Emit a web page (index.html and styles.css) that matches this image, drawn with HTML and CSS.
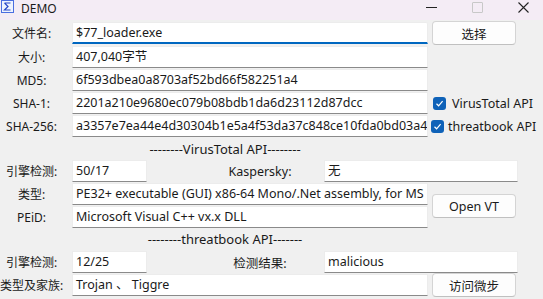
FILE: index.html
```html
<!DOCTYPE html>
<html lang="zh">
<head>
    <meta charset="UTF-8">
    <title>DEMO</title>
    <link rel="stylesheet" href="styles.css">
</head>
<body>
    <div class="titlebar">
        <svg class="app-icon" width="14" height="14" viewBox="0 0 14 14">
            <rect x="0.5" y="0.5" width="12" height="12" fill="#eef3ff" stroke="#4a6ee0"/>
            <path d="M3.5 3 H9.5 M3.5 3 L7 6.5 L3.5 10 H9.5" fill="none" stroke="#2848c8" stroke-width="1.2"/>
        </svg>
        <span class="title">DEMO</span>
        <div class="controls">
            <span class="ctl min"></span>
            <span class="ctl max"></span>
            <svg class="ctl close" width="11" height="11" viewBox="0 0 11 11">
                <path d="M0.5 0.5 L10.5 10.5 M10.5 0.5 L0.5 10.5" stroke="#222" stroke-width="1.1"/>
            </svg>
        </div>
    </div>

    <div class="form">
        <div class="row r1">
            <label class="lbl">文件名:</label>
            <div class="field wide focus">$77_loader.exe</div>
            <button class="btn">选择</button>
        </div>
        <div class="row r2">
            <label class="lbl">大小:</label>
            <div class="field wide">407,040字节</div>
        </div>
        <div class="row r3">
            <label class="lbl">MD5:</label>
            <div class="field wide">6f593dbea0a8703af52bd66f582251a4</div>
        </div>
        <div class="row r4">
            <label class="lbl">SHA-1:</label>
            <div class="field wide">2201a210e9680ec079b08bdb1da6d23112d87dcc</div>
            <span class="check vt"><span class="box"><svg width="9" height="9" viewBox="0 0 9 9"><path d="M1.5 4.8 L3.6 6.8 L7.6 2.2" fill="none" stroke="#fff" stroke-width="1.2"/></svg></span>VirusTotal API</span>
        </div>
        <div class="row r5">
            <label class="lbl">SHA-256:</label>
            <div class="field wide">a3357e7ea44e4d30304b1e5a4f53da37c848ce10fda0bd03a4f</div>
            <span class="check tb"><span class="box"><svg width="9" height="9" viewBox="0 0 9 9"><path d="M1.5 4.8 L3.6 6.8 L7.6 2.2" fill="none" stroke="#fff" stroke-width="1.2"/></svg></span>threatbook API</span>
        </div>

        <div class="sep">--------VirusTotal API--------</div>

        <div class="row r6">
            <label class="lbl">引擎检测:</label>
            <div class="field small">50/17</div>
            <span class="mid">Kaspersky:</span>
            <div class="field right">无</div>
        </div>
        <div class="pair">
            <div class="pair-rows">
                <div class="row r7">
                    <label class="lbl">类型:</label>
                    <div class="field wide">PE32+ executable (GUI) x86-64 Mono/.Net assembly, for MS</div>
                </div>
                <div class="row r8">
                    <label class="lbl">PEiD:</label>
                    <div class="field wide">Microsoft Visual C++ vx.x DLL</div>
                </div>
            </div>
            <button class="btn">Open VT</button>
        </div>

        <div class="sep sep2">--------threatbook API-------</div>

        <div class="row r9">
            <label class="lbl">引擎检测:</label>
            <div class="field small">12/25</div>
            <span class="mid">检测结果:</span>
            <div class="field right">malicious</div>
        </div>
        <div class="row r10">
            <label class="lbl">类型及家族:</label>
            <div class="field wide">Trojan 、 Tiggre</div>
            <button class="btn">访问微步</button>
        </div>
    </div>
</body>
</html>
```

FILE: styles.css
```css
body {
    margin: 0;
    width: 543px;
    height: 299px;
    overflow: hidden;
    background-color: #f0f0f0;
    font-family: "Noto Sans", "Noto Sans CJK SC", sans-serif;
    font-size: 12px;
    color: #1a1a1a;
}
.titlebar {
    height: 20px;
    display: flex;
    align-items: flex-start;
    background-color: #f4ecf5;
}
.app-icon {
    margin: 0 0 0 1px;
}
.title {
    margin-left: 6px;
    line-height: 17px;
}
.controls {
    margin-left: auto;
    display: flex;
    align-items: flex-start;
}
.ctl {
    display: block;
}
.min {
    width: 11px;
    height: 1px;
    background-color: #222;
    margin: 7px 0 0 0;
}
.max {
    width: 9px;
    height: 9px;
    border: 1px solid #c8c8c8;
    border-radius: 1px;
    margin: 2px 0 0 35px;
}
.close {
    margin: 2px 14px 0 35px;
}
.form {
    padding-top: 2px;
}
.row {
    display: flex;
    align-items: center;
    height: 22px;
    margin-bottom: 1px;
}
.r2 {
    margin-top: 2px;
}
.r5 {
    margin-top: 1px;
}
.pair {
    display: flex;
    align-items: center;
}
.lbl {
    width: 63px;
    margin-right: 9px;
    text-align: center;
    white-space: nowrap;
}
.field {
    box-sizing: border-box;
    height: 22px;
    line-height: 20px;
    padding: 0 3px;
    background-color: #fff;
    border: 1px solid #ececec;
    border-bottom: 1px solid #8a8a8a;
    white-space: nowrap;
    overflow: hidden;
    font-size: 12.5px;
}
.wide {
    width: 356px;
}
.small {
    width: 75px;
}
.right {
    width: 194px;
}
.focus {
    border-bottom: 2px solid #0067c0;
    border-radius: 2px 2px 0 0;
}
.mid {
    width: 128px;
    padding-left: 49px;
    text-align: center;
    font-size: 12.5px;
}
.btn {
    box-sizing: border-box;
    width: 84px;
    height: 24px;
    margin-left: 4px;
    background-color: #fdfdfd;
    border: 1px solid #d4d4d4;
    border-bottom-color: #c0c0c0;
    border-radius: 4px;
    font-family: inherit;
    font-size: 12.5px;
    color: #1a1a1a;
    padding: 0;
}
.check {
    display: flex;
    align-items: center;
    white-space: nowrap;
    font-size: 12.5px;
}
.box {
    width: 13px;
    height: 13px;
    border-radius: 3px;
    background-color: #0f62b8;
    display: flex;
    align-items: center;
    justify-content: center;
    margin-right: 6px;
}
.vt {
    margin-left: 5px;
}
.tb {
    margin-left: 3px;
}
.tb .box {
    margin-right: 4px;
}
.sep {
    width: 450px;
    text-align: center;
    height: 22px;
    line-height: 22px;
    font-size: 13px;
}
.sep2 {
    line-height: 20px;
}
```
